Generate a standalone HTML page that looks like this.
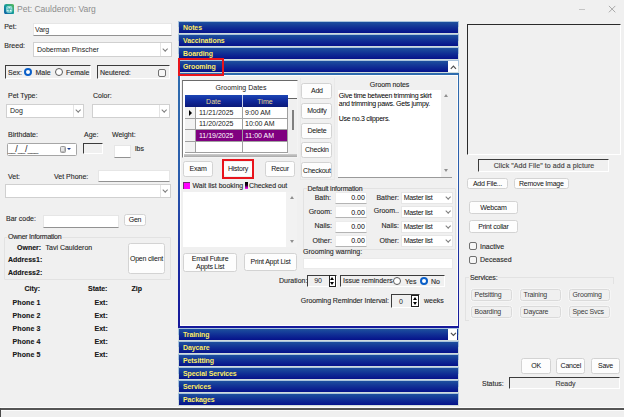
<!DOCTYPE html>
<html><head><meta charset="utf-8"><title>Pet: Caulderon: Varg</title>
<style>
*{box-sizing:border-box;margin:0;padding:0}
html,body{width:624px;height:417px;overflow:hidden;background:#f0f0f0}
body{position:relative;font-family:"Liberation Sans",sans-serif;font-size:7px;color:#1a1a1a;line-height:8px}
.a{position:absolute;white-space:nowrap}
.l{position:absolute;white-space:nowrap;color:#2a2a2a;-webkit-text-stroke:0.12px #2a2a2a}
.b{font-weight:bold;color:#111}
.r{text-align:right}
.c{text-align:center}
.inp{position:absolute;background:#fff;border:1px solid #e6e6e6;border-bottom-color:#929292}
.inp.r{border-color:#ececec;border-bottom-color:#b4b4b4}
.sel{position:absolute;background:#fff;border:1px solid #d0d0d0}
.sel i{position:absolute;right:0;top:0;bottom:0;width:10px;border-left:1px solid #e4e4e4}
.sel i:after,.chev:after{content:"";position:absolute;left:2px;top:50%;width:3.4px;height:3.4px;margin-top:-3px;border-right:0.75px solid #7c7c7c;border-bottom:0.75px solid #7c7c7c;transform:rotate(45deg)}
.sunk{position:absolute;border:1px solid #fff;border-top:1.4px solid #3c3c3c;border-left:1.4px solid #3c3c3c;background:#f0f0f0}
.btn{letter-spacing:-0.22px;position:absolute;background:#fdfdfd;border:1px solid #d3d3d3;border-radius:2.5px;text-align:center;white-space:nowrap;color:#111}
.grp{position:absolute;border:1px solid #dcdcdc;border-radius:1px}
.radio{position:absolute;width:8px;height:8px;border-radius:50%;border:0.9px solid #5a5a5a;background:#fff}
.radio.on{border:2px solid #0a5fc8;background:#fff}
.chk{position:absolute;width:8px;height:8px;border:1px solid #707070;border-radius:2px;background:#f6f6f6}
.bar{position:absolute;left:178px;width:281px;height:13px;background:linear-gradient(#a9c3dc 0,#a9c3dc 50%,#cfdcdc 50%)}
.bar b{position:absolute;left:1px;right:1px;top:1px;bottom:1.4px;background:linear-gradient(#1d509e,#0f2c94 55%,#06128a);color:#fbf07e;font-size:7px;line-height:11.5px;padding-left:4px;text-shadow:0.4px 0.4px 0 rgba(20,20,0,.55);letter-spacing:-0.1px}
.spin{width:7px;height:10px;background:#fff;border:1px solid #222}
.spin:before{content:"";position:absolute;left:50%;margin-left:-2.3px;top:1px;border-left:2.3px solid transparent;border-right:2.3px solid transparent;border-bottom:3.4px solid #000}
.spin:after{content:"";position:absolute;left:50%;margin-left:-2.3px;bottom:1px;border-left:2.3px solid transparent;border-right:2.3px solid transparent;border-top:3.4px solid #000}
.sv{width:40.6px;height:12px;line-height:10.2px;box-shadow:0 0 0 0.6px #fafafa;text-align:left;padding-left:2.6px;letter-spacing:-0.2px;background:#f0f0f0;border-color:#dadada;color:#3a3a3a}
</style></head><body>

<!-- title bar -->
<svg class="a" style="left:4px;top:3.7px" width="10.3" height="10.3" viewBox="0 0 10 10"><defs><linearGradient id="ig" x1="0" y1="1" x2="1" y2="0"><stop offset="0" stop-color="#0e58a6"/><stop offset="0.5" stop-color="#149c9c"/><stop offset="1" stop-color="#62bb52"/></linearGradient></defs><rect x="0" y="0" width="10" height="10" rx="2.3" fill="url(#ig)"/><rect x="2.1" y="1.9" width="6" height="6.5" rx="1.7" fill="#b4ecea" opacity="0.8"/><path d="M5.1 2.6v5.2M2.8 5.3h4.6M3.4 3.4l3.4 3.6M6.8 3.4l-3.4 3.6" stroke="#27a3a0" stroke-width="0.55" opacity="0.85"/><circle cx="5.1" cy="3.6" r="0.6" fill="#f2fffc"/><circle cx="3.8" cy="6.3" r="0.6" fill="#f2fffc"/><circle cx="6.4" cy="6.3" r="0.6" fill="#f2fffc"/></svg>
<div class="a" style="left:17px;top:4px;font-size:8.5px;line-height:10px;color:#8c8c8c">Pet: Caulderon: Varg</div>
<div class="a" style="left:579px;top:9px;width:6px;height:1px;background:#c4c4c4"></div>
<svg class="a" style="left:607px;top:4px" width="10" height="10" viewBox="0 0 10 10"><path d="M1.9 1.9 L8.3 8.3 M8.3 1.9 L1.9 8.3" stroke="#a2a2a2" stroke-width="0.9" fill="none"/></svg>

<!-- LEFT PANEL -->
<div class="l" style="left:4.2px;top:23px">Pet:</div>
<div class="inp" style="left:33px;top:23.4px;width:139px;height:13px"></div>
<div class="a" style="left:35px;top:26px">Varg</div>
<div class="l" style="left:4.2px;top:42px;letter-spacing:0.05px">Breed:</div>
<div class="sel" style="left:33px;top:42.4px;width:139px;height:14.8px"><i style="width:11.5px"></i></div>
<div class="a" style="left:37px;top:46px">Doberman Pinscher</div>

<div class="sunk" style="left:5px;top:65.4px;width:86.4px;height:13.6px;border-top-width:1.4px;border-left-width:1.4px"></div>
<div class="l" style="left:8px;top:69px">Sex:</div>
<div class="radio on" style="left:24px;top:68px"></div>
<div class="l" style="left:35.5px;top:69px">Male</div>
<div class="radio" style="left:54.5px;top:68px"></div>
<div class="l" style="left:66px;top:69px">Female</div>
<div class="sunk" style="left:97px;top:65.4px;width:73px;height:13.6px;border-top-width:1.4px;border-left-width:1.4px"></div>
<div class="l" style="left:100px;top:69px">Neutered:</div>
<div class="chk" style="left:158px;top:68.6px;width:8.4px;height:8.2px"></div>

<div class="l" style="left:8px;top:92px">Pet Type:</div>
<div class="l" style="left:93px;top:92px">Color:</div>
<div class="sel" style="left:6px;top:104px;width:78px;height:14px"><i></i></div>
<div class="a" style="left:10px;top:107px">Dog</div>
<div class="sel" style="left:92px;top:104px;width:78px;height:14px"><i></i></div>

<div class="l" style="left:8px;top:131px">Birthdate:</div>
<div class="l" style="left:84px;top:131px">Age:</div>
<div class="l" style="left:112px;top:131px">Weight:</div>
<div class="sel" style="left:6.5px;top:143px;width:70px;height:13px;border-color:#a6a6a6;border-radius:1.5px"></div>
<div class="a" style="left:8px;top:143.8px;line-height:10px;letter-spacing:-0.3px">__<span style="font-size:9px;letter-spacing:0">/</span>__<span style="font-size:9px;letter-spacing:0">/</span>___</div>
<div class="a" style="left:59.5px;top:146px;width:6px;height:7px;border:1px solid #999;border-radius:1.5px;background:#e4e4e4;box-shadow:inset -1px -1px 0 #bbb"></div>
<div class="a" style="left:67px;top:148px;width:0;height:0;border-left:2.6px solid transparent;border-right:2.6px solid transparent;border-top:2.8px solid #1c3c8c"></div>
<div class="sunk" style="left:83px;top:143px;width:20px;height:11px"></div>
<div class="inp" style="left:113.5px;top:145px;width:17px;height:12.5px"></div>
<div class="l" style="left:135px;top:145px">lbs</div>

<div class="l" style="left:8px;top:172.5px">Vet:</div>
<div class="l" style="left:54px;top:172.5px">Vet Phone:</div>
<div class="inp" style="left:98px;top:170px;width:72px;height:12px"></div>
<div class="sel" style="left:5px;top:184px;width:166px;height:14px"><i></i></div>

<div class="l" style="left:6px;top:215px">Bar code:</div>
<div class="inp" style="left:43px;top:214.5px;width:76.4px;height:13px"></div>
<div class="btn" style="left:124px;top:214px;width:22px;height:12px;line-height:10px">Gen</div>

<div class="grp" style="left:4px;top:237px;width:167px;height:43px;border-color:#e2e2e2"></div>
<div class="l" style="left:7px;top:233.4px;background:#f0f0f0;padding:0 1px;letter-spacing:-0.25px">Owner Information</div>
<div class="l b" style="left:17px;top:244.3px">Owner:</div>
<div class="l" style="left:45.5px;top:244.3px">Tavi Caulderon</div>
<div class="l b" style="left:8px;top:255.8px">Address1:</div>
<div class="l b" style="left:8px;top:268.8px">Address2:</div>
<div class="btn" style="left:128px;top:243px;width:37px;height:31px;line-height:29px;letter-spacing:-0.2px">Open client</div>
<div class="l b" style="left:24.5px;top:285px">City:</div>
<div class="l b" style="left:88px;top:285px">State:</div>
<div class="l b" style="left:131.5px;top:285px">Zip</div>
<div class="l b" style="left:12.5px;top:299.2px;letter-spacing:0.1px">Phone 1</div><div class="l b" style="left:94.5px;top:299.2px">Ext:</div>
<div class="l b" style="left:12.5px;top:312.2px;letter-spacing:0.1px">Phone 2</div><div class="l b" style="left:94.5px;top:312.2px">Ext:</div>
<div class="l b" style="left:12.5px;top:325.2px;letter-spacing:0.1px">Phone 3</div><div class="l b" style="left:94.5px;top:325.2px">Ext:</div>
<div class="l b" style="left:12.5px;top:338.2px;letter-spacing:0.1px">Phone 4</div><div class="l b" style="left:94.5px;top:338.2px">Ext:</div>
<div class="l b" style="left:12.5px;top:351.2px;letter-spacing:0.1px">Phone 5</div><div class="l b" style="left:94.5px;top:351.2px">Ext:</div>

<!-- MIDDLE ACCORDION -->
<div class="bar" style="top:21px"><b>Notes</b></div>
<div class="bar" style="top:34px"><b>Vaccinations</b></div>
<div class="bar" style="top:47px"><b>Boarding</b></div>
<div class="bar" style="top:60px"><b>Grooming</b></div>

<!-- panel -->
<div class="a" style="left:178px;top:73.4px;width:281.2px;height:254.3px;background:linear-gradient(#2f6cae,#2a5cac 40%,#1a2aa0 75%,#16189a)"></div>
<div class="a" style="left:179.7px;top:74.6px;width:277.9px;height:251.6px;background:#fdfdfd"></div>
<div class="a" style="left:180.7px;top:75.8px;width:275.9px;height:249.6px;background:#f0f0f0"></div>
<div class="a" style="left:177.8px;top:58.4px;width:46.2px;height:17.2px;border:2.2px solid #e8141c"></div>
<div class="a" style="left:448px;top:60.5px;width:9.6px;height:11px;background:#fff"></div>
<svg class="a" style="left:448px;top:60.5px" width="10" height="11" viewBox="0 0 10 11"><path d="M2.8 7.8 L5.4 5.2 L8 7.8" stroke="#505050" stroke-width="1.2" fill="none"/></svg>

<!--MID-->
<!-- grid -->
<div class="a" style="left:182px;top:80px;width:116px;height:77.5px;background:#fff;border:1px solid #f4f4f4;border-top:1.6px solid #6a6a6a;border-left:1.6px solid #7a7a7a"></div>
<div class="a c" style="left:185px;top:84px;width:112px">Grooming Dates</div>
<div class="a" style="left:185px;top:95px;width:103px;height:12px;background:linear-gradient(#1c46b4,#10289a 50%,#0a1878)"></div>
<div class="a" style="left:242px;top:95px;width:1px;height:12px;background:#c8d0e8"></div>
<div class="a c" style="left:185px;top:97.5px;width:57px;color:#e4d88c">Date</div>
<div class="a c" style="left:243px;top:97.5px;width:44px;color:#e4d88c">Time</div>
<!-- rows -->
<div class="a" style="left:185px;top:107px;width:11px;height:46px;background:#f2f2f2;border-right:1px solid #a0a0a0"></div>
<div class="a" style="left:196px;top:130px;width:92px;height:11px;background:#800080"></div>
<div class="a" style="left:185px;top:118px;width:103px;height:1px;background:#a0a0a0"></div>
<div class="a" style="left:185px;top:129px;width:103px;height:1px;background:#a0a0a0"></div>
<div class="a" style="left:185px;top:141px;width:103px;height:1px;background:#a0a0a0"></div>
<div class="a" style="left:185px;top:152px;width:103px;height:1px;background:#a0a0a0"></div>
<div class="a" style="left:242px;top:107px;width:1px;height:46px;background:#a0a0a0"></div>
<div class="a" style="left:287px;top:107px;width:1px;height:46px;background:#a0a0a0"></div>
<div class="a" style="left:183.6px;top:153.5px;width:113.4px;height:3.6px;background:linear-gradient(#cfcfcf,#a8a8a8)"></div>
<div class="a" style="left:188.6px;top:110px;width:0;height:0;border-top:3px solid transparent;border-bottom:3px solid transparent;border-left:3.8px solid #000"></div>
<div class="a" style="left:199px;top:109px">11/21/2025</div><div class="a" style="left:245px;top:109px">9:00 AM</div>
<div class="a" style="left:199px;top:120px">11/20/2025</div><div class="a" style="left:245px;top:120px">10:00 AM</div>
<div class="a" style="left:199px;top:132px;color:#fff">11/19/2025</div><div class="a" style="left:245px;top:132px;color:#fff">11:00 AM</div>
<!-- grid scrollbar -->
<div class="a" style="left:288px;top:99px;width:9px;height:55px;background:#f0f0f0"></div>
<div class="a" style="left:287.6px;top:97.7px;width:9.4px;height:1.3px;background:#666"></div>
<div class="a" style="left:292.3px;top:110px;width:1.5px;height:19.6px;background:#808080"></div>

<!-- buttons under grid -->
<div class="btn" style="left:183px;top:161px;width:30px;height:16px;line-height:14px">Exam</div>
<div class="btn" style="left:224px;top:162px;width:28px;height:14px;line-height:12px;border-color:#fff">History</div>
<div class="a" style="left:221.7px;top:159.1px;width:32.7px;height:19.5px;border:2.4px solid #e8141c"></div>
<div class="btn" style="left:265px;top:161px;width:30px;height:16px;line-height:14px">Recur</div>

<!-- side buttons -->
<div class="a" style="left:299.6px;top:78px;width:35.8px;height:101.5px;border:1px solid #e9e9e9;border-top:none"></div>
<div class="btn" style="left:301.4px;top:82.7px;width:31px;height:16px;line-height:14.2px">Add</div>
<div class="btn" style="left:301.4px;top:102.6px;width:31px;height:16px;line-height:14.2px">Modify</div>
<div class="btn" style="left:301.4px;top:122.5px;width:31px;height:16px;line-height:14.2px">Delete</div>
<div class="btn" style="left:301.4px;top:142.3px;width:31px;height:16px;line-height:14.8px">Checkin</div>
<div class="btn" style="left:301.4px;top:161.8px;width:31px;height:16.6px;line-height:15.6px;letter-spacing:-0.25px">Checkout</div>

<!-- groom notes -->
<div class="l c" style="left:338px;top:81.4px;width:103px;letter-spacing:-0.1px">Groom notes</div>
<div class="a" style="left:338px;top:90px;width:114px;height:88px;background:#fff;border-bottom:1px solid #9a9a9a"></div>
<div class="a" style="left:441px;top:90px;width:11px;height:87px;background:#f0f0f0"></div>
<div class="a" style="left:443.7px;top:94.4px;width:0;height:0;border-left:2.6px solid transparent;border-right:2.6px solid transparent;border-bottom:3.2px solid #909090"></div>
<div class="a" style="left:443.7px;top:169.3px;width:0;height:0;border-left:2.6px solid transparent;border-right:2.6px solid transparent;border-top:3.2px solid #909090"></div>
<div class="a" style="left:338.8px;top:92.3px;letter-spacing:-0.28px;color:#000">Give time between trimming skirt</div>
<div class="a" style="left:338.8px;top:100.3px;letter-spacing:-0.28px;color:#000">and trimming paws. Gets jumpy.</div>
<div class="a" style="left:338.8px;top:115.3px;letter-spacing:-0.28px;color:#000">Use no.3 clippers.</div>

<!-- legend -->
<div class="a" style="left:183px;top:182px;width:7px;height:7px;background:#ff00ff;border-top:1px solid #703070;border-left:1px solid #703070"></div>
<div class="l" style="left:192.5px;top:182px">Wait list booking</div>
<div class="a" style="left:245px;top:182px;width:2.6px;height:7px;background:linear-gradient(#000 0,#1a001a 45%,#c000c0 80%,#ff20ff)"></div>
<div class="l" style="left:249px;top:182px;letter-spacing:-0.1px">Checked out</div>
<div class="a" style="left:183px;top:192px;width:114px;height:55px;background:#fff"></div>
<div class="a" style="left:286px;top:192px;width:11px;height:55px;background:#f2f2f2"></div>
<div class="a" style="left:289.7px;top:196px;width:0;height:0;border-left:2.6px solid transparent;border-right:2.6px solid transparent;border-bottom:3.2px solid #909090"></div>
<div class="a" style="left:289.7px;top:240px;width:0;height:0;border-left:2.6px solid transparent;border-right:2.6px solid transparent;border-top:3.2px solid #909090"></div>
<div class="btn" style="left:183.4px;top:252.5px;width:53.4px;height:19.2px;line-height:8px;padding-top:1.4px;white-space:normal;letter-spacing:-0.27px">Email Future Appts List</div>
<div class="btn" style="left:244.2px;top:253.2px;width:52.6px;height:17.8px;line-height:15.6px">Print Appt List</div>

<!-- default info -->
<div class="grp" style="left:303px;top:188px;width:153px;height:62px;border-bottom-color:#f0f0f0;border-color:#e2e2e2"></div>
<div class="l" style="left:306.5px;top:184.5px;background:#f0f0f0;padding:0 1px;letter-spacing:-0.2px">Default information</div>
<div class="l r" style="left:299px;top:194px;width:32px">Bath:</div>
<div class="l r" style="left:300px;top:208px;width:32px">Groom:</div>
<div class="l r" style="left:300px;top:222px;width:32px">Nails:</div>
<div class="l r" style="left:300px;top:236.6px;width:32px">Other:</div>
<div class="inp r" style="left:335.2px;top:192px;width:31.6px;height:11.8px;padding:1.3px 1px 0 0;color:#000">0.00</div>
<div class="inp r" style="left:335.2px;top:206.4px;width:31.6px;height:11.8px;padding:1.3px 1px 0 0;color:#000">0.00</div>
<div class="inp r" style="left:335.2px;top:220.8px;width:31.6px;height:11.8px;padding:1.3px 1px 0 0;color:#000">0.00</div>
<div class="inp r" style="left:335.2px;top:235.2px;width:31.6px;height:11.8px;padding:1.3px 1px 0 0;color:#000">0.00</div>
<div class="l r" style="left:369px;top:194px;width:30px">Bather:</div>
<div class="l r" style="left:369px;top:207.4px;width:30px">Groom..</div>
<div class="l r" style="left:369px;top:222px;width:30px">Nails:</div>
<div class="l r" style="left:369px;top:236.6px;width:30px">Other:</div>
<div class="sel" style="left:401.3px;top:192px;width:52px;height:11.8px;border-color:#e6e6e6"><i style="border:none;width:8.4px"></i><span class="a" style="left:1.4px;top:1.2px;letter-spacing:-0.3px;color:#111">Master list</span></div>
<div class="sel" style="left:401.3px;top:206.4px;width:52px;height:11.8px;border-color:#e6e6e6"><i style="border:none;width:8.4px"></i><span class="a" style="left:1.4px;top:1.2px;letter-spacing:-0.3px;color:#111">Master list</span></div>
<div class="sel" style="left:401.3px;top:220.8px;width:52px;height:11.8px;border-color:#e6e6e6"><i style="border:none;width:8.4px"></i><span class="a" style="left:1.4px;top:1.2px;letter-spacing:-0.3px;color:#111">Master list</span></div>
<div class="sel" style="left:401.3px;top:235.2px;width:52px;height:11.8px;border-color:#e6e6e6"><i style="border:none;width:8.4px"></i><span class="a" style="left:1.4px;top:1.2px;letter-spacing:-0.3px;color:#111">Master list</span></div>

<div class="l" style="left:303px;top:248px">Grooming warning:</div>
<div class="a" style="left:303px;top:258px;width:150px;height:11px;background:#fff;border:1px solid #eaeaea"></div>

<div class="l" style="left:279px;top:277px">Duration:</div>
<div class="sunk" style="left:307px;top:275px;width:30px;height:12px;background:#f0f0f0"></div>
<div class="a" style="left:314.2px;top:277px">90</div>
<div class="a spin" style="left:328.8px;top:275px;width:7.4px;height:11.6px"></div>
<div class="sunk" style="left:340px;top:275px;width:105px;height:12px"></div>
<div class="l" style="left:343px;top:277px">Issue reminders</div>
<div class="radio" style="left:393px;top:277px"></div>
<div class="l" style="left:405px;top:278px">Yes</div>
<div class="radio on" style="left:420px;top:277px"></div>
<div class="l" style="left:431px;top:278px">No</div>

<div class="l" style="left:300.8px;top:297px;letter-spacing:-0.07px">Grooming Reminder Interval:</div>
<div class="sunk" style="left:391px;top:294px;width:28.6px;height:13.8px"></div>
<div class="a" style="left:399px;top:298px">0</div>
<div class="a spin" style="left:411.2px;top:294.6px;width:7.8px;height:12.8px"></div>
<div class="l" style="left:424px;top:297px">weeks</div>
<!--/MID-->

<div class="bar" style="top:328px"><b>Training</b></div>
<div class="bar" style="top:341px"><b>Daycare</b></div>
<div class="bar" style="top:354px"><b>Petsitting</b></div>
<div class="bar" style="top:367px"><b>Special Services</b></div>
<div class="bar" style="top:380px"><b>Services</b></div>
<div class="bar" style="top:393px"><b>Packages</b></div>
<div class="a" style="left:448px;top:328.5px;width:9.3px;height:11.5px;background:#fff"></div>
<svg class="a" style="left:448px;top:328.5px" width="10" height="11" viewBox="0 0 10 11"><path d="M2.9 3.8 L5.4 6.4 L7.9 3.8" stroke="#505050" stroke-width="1.2" fill="none"/></svg>

<!--RIGHT-->
<!-- picture box -->
<div class="a" style="left:467px;top:24px;width:154px;height:131px;background:#f0f0f0;border:1px solid #fff;border-top:1.4px solid #2a2a2a;border-left:1.4px solid #2a2a2a"></div>
<div class="sunk" style="left:478.2px;top:159px;width:130.6px;height:13.4px;border-top-width:1.4px;border-left-width:1.4px"></div>
<div class="l c" style="left:479px;top:162.3px;width:130px;letter-spacing:0.08px;color:#484848">Click "Add File" to add a picture</div>
<div class="btn" style="left:467.2px;top:177.6px;width:40.6px;height:11.8px;line-height:9.8px">Add File...</div>
<div class="btn" style="left:514px;top:177.6px;width:54.6px;height:11.8px;line-height:9.8px">Remove Image</div>
<div class="btn" style="left:469.3px;top:200.7px;width:48.3px;height:13.3px;line-height:11.3px">Webcam</div>
<div class="btn" style="left:469.3px;top:219.6px;width:48.3px;height:13.6px;line-height:11.6px">Print collar</div>
<div class="chk" style="left:468.6px;top:242.1px"></div>
<div class="l" style="left:480px;top:243px">Inactive</div>
<div class="chk" style="left:468.6px;top:256px"></div>
<div class="l" style="left:480px;top:256px">Deceased</div>
<!-- services -->
<div class="grp" style="left:465px;top:277px;width:149px;height:44px;border-color:#e2e2e2;border-right-color:#f0f0f0;border-bottom-color:#f0f0f0"></div>
<div class="a" style="left:613px;top:277px;width:1px;height:7px;background:#e2e2e2"></div>
<div class="a" style="left:465px;top:320px;width:4px;height:1px;background:#e2e2e2"></div>
<div class="l" style="left:469px;top:273.7px;background:#f0f0f0;padding:0 1px;letter-spacing:-0.15px">Services:</div>
<div class="btn sv" style="left:471px;top:288.9px">Petsitting</div>
<div class="btn sv" style="left:520px;top:288.9px">Training</div>
<div class="btn sv" style="left:569px;top:288.9px">Grooming</div>
<div class="btn sv" style="left:471px;top:306px">Boarding</div>
<div class="btn sv" style="left:520px;top:306px">Daycare</div>
<div class="btn sv" style="left:569px;top:306px">Spec Svcs</div>
<!-- ok cancel save -->
<div class="btn" style="left:521.4px;top:357.7px;width:29.4px;height:16.5px;line-height:14.6px">OK</div>
<div class="btn" style="left:556.1px;top:357.7px;width:29.4px;height:16.5px;line-height:14.6px">Cancel</div>
<div class="btn" style="left:590.8px;top:357.7px;width:29.4px;height:16.5px;line-height:14.6px">Save</div>
<div class="l" style="left:482px;top:379.5px">Status:</div>
<div class="sunk" style="left:509px;top:377px;width:111px;height:12.4px"></div>
<div class="l c" style="left:510.5px;top:380px;width:110px;color:#484848">Ready</div>
<!--/RIGHT-->

<!-- bottom -->
<div class="a" style="left:0;top:406.8px;width:624px;height:4px;background:#fbfbfb"></div>
<div class="a" style="left:0;top:407.7px;width:624px;height:2px;background:#555"></div>
<div class="a" style="left:0;top:410.6px;width:624px;height:7px;background:#efefef"></div>
<div class="a" style="left:0;top:408px;width:1.2px;height:9px;background:#4a4a4a"></div>
</body></html>
